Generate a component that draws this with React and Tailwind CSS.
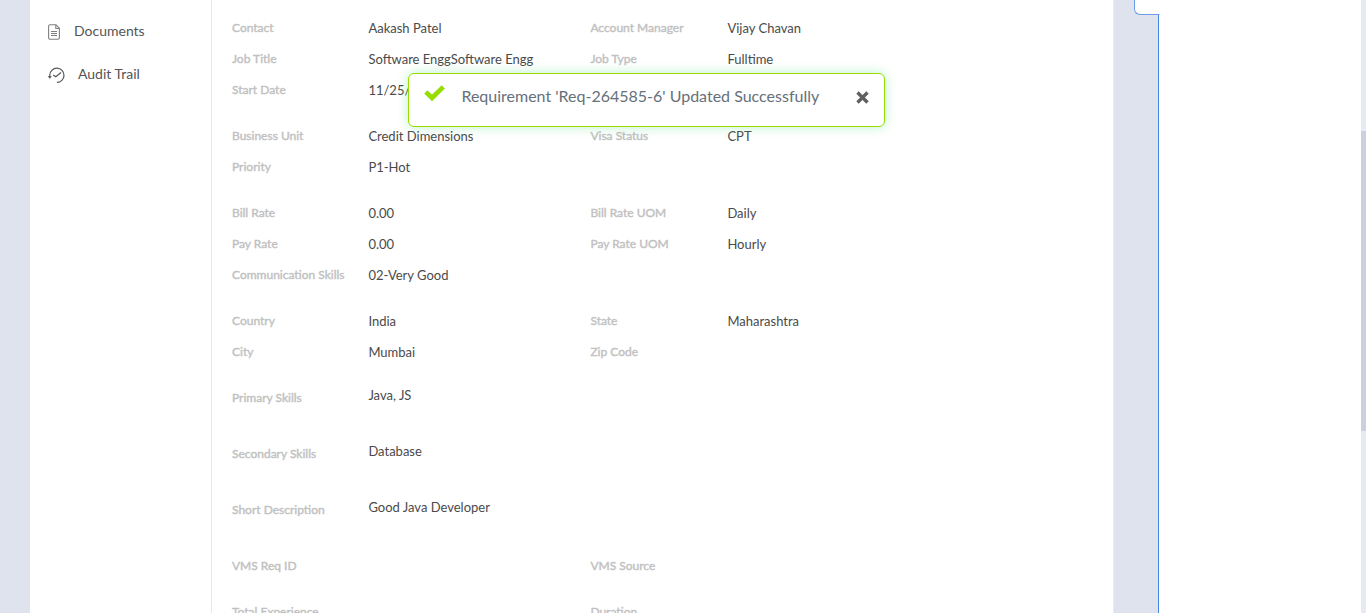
const groups = [
  [
    ['Contact', 'Aakash Patel', 'Account Manager', 'Vijay Chavan'],
    ['Job Title', 'Software EnggSoftware Engg', 'Job Type', 'Fulltime'],
    ['Start Date', '11/25/2020', '', ''],
  ],
  [
    ['Business Unit', 'Credit Dimensions', 'Visa Status', 'CPT'],
    ['Priority', 'P1-Hot', '', ''],
  ],
  [
    ['Bill Rate', '0.00', 'Bill Rate UOM', 'Daily'],
    ['Pay Rate', '0.00', 'Pay Rate UOM', 'Hourly'],
    ['Communication Skills', '02-Very Good', '', ''],
  ],
  [
    ['Country', 'India', 'State', 'Maharashtra'],
    ['City', 'Mumbai', 'Zip Code', ''],
  ],
];

const longFields = [
  ['Primary Skills', 'Java, JS'],
  ['Secondary Skills', 'Database'],
  ['Short Description', 'Good Java Developer'],
];

function Label({ children }) {
  return (
    <span className="text-[12px] leading-[18px] text-[#c1c1c1] [-webkit-text-stroke:0.4px_#c1c1c1]">
      {children}
    </span>
  );
}

function Value({ children }) {
  return <span className="text-[13px] leading-[18px] text-[#4a4a4a]">{children}</span>;
}

function Row({ cells }) {
  return (
    <div className="grid h-[31px] grid-cols-[136.4px_222px_137px_1fr] items-center whitespace-nowrap">
      <Label>{cells[0]}</Label>
      <Value>{cells[1]}</Value>
      <Label>{cells[2]}</Label>
      <Value>{cells[3]}</Value>
    </div>
  );
}

function DocumentIcon() {
  return (
    <svg className="h-4 w-3" viewBox="0 0 12 16" fill="none" stroke="#808080" strokeWidth="1.1">
      <path d="M2 .8h6l3.400 3.400v9.600a1.400 1.400 0 0 1-1.400 1.400H2A1.400 1.400 0 0 1 .6 13.800V2.200A1.400 1.400 0 0 1 2 .8Z" />
      <path d="M7.800 1v3.500h3.400M3 7.500h6M3 9.500h6M3 11.500h6" />
    </svg>
  );
}

function AuditIcon() {
  return (
    <svg className="-ml-px h-[18px] w-[18px]" viewBox="0 0 18 18" fill="none" stroke="#555" strokeWidth="1.2">
      <path d="M2.800 11V9a7.100 7.100 0 1 1 7.100 7.400" />
      <path d="M6.200 8.900 8.800 10.800 14 6.500" />
      <path d="M.6 10.300h4.200L2.900 12.800Z" fill="#555" stroke="none" />
    </svg>
  );
}

function Toast() {
  return (
    <div className="absolute top-[73px] left-[408px] flex h-[54px] w-[477px] items-start rounded-[6px] border border-[#97de00] bg-white shadow-[0_0_12px_rgba(80,220,120,0.4)]">
      <svg className="mt-[11px] ml-[15px] h-[16px] w-[21px]" viewBox="0 0 21 16" fill="none" stroke="#97de00" strokeWidth="4.600">
        <path d="M1.800 6.900 8 13 19.300 1.900" />
      </svg>
      <span className="mt-[11px] ml-[16.4px] w-[394.6px] text-[16px] leading-[22px] whitespace-nowrap text-[#66707a]">
        Requirement 'Req-264585-6' Updated Successfully
      </span>
      <svg className="mt-[17px] h-[13px] w-[13px]" viewBox="0 0 13 13" stroke="#606060" strokeWidth="3.300">
        <path d="m1.500 1.500 10 10M11.500 1.500l-10 10" />
      </svg>
    </div>
  );
}

export default function App() {
  return (
    <div className="relative flex h-[613px] w-[1366px] overflow-hidden bg-[#dfe3ee] font-['Lato','Open_Sans',sans-serif]">
      <aside className="ml-[30px] flex w-[182px] shrink-0 flex-col border-r border-[#e6e8ee] bg-white pt-[10px] text-[14px] text-[#555]">
        <a className="flex h-[43px] items-center pl-[18px]">
          <DocumentIcon />
          <span className="ml-[14px] pb-[3px]">Documents</span>
        </a>
        <a className="flex h-[43px] items-center pl-[18px]">
          <AuditIcon />
          <span className="ml-[13px] pb-[3px]">Audit Trail</span>
        </a>
      </aside>

      <main className="flex w-[902px] shrink-0 flex-col gap-[15px] border-r border-[#e9ecf3] bg-white pt-[12px] pl-[20px]">
        {groups.map((rows, i) => (
          <section key={i}>
            {rows.map((cells) => (
              <Row key={cells[0]} cells={cells} />
            ))}
          </section>
        ))}
        <section>
          {longFields.map(([label, value]) => (
            <div key={label} className="grid h-[56px] grid-cols-[136.4px_1fr] items-start">
              <div className="flex pt-[7px]"><Label>{label}</Label></div>
              <div className="flex pt-[4px]"><Value>{value}</Value></div>
            </div>
          ))}
          <Row cells={['VMS Req ID', '', 'VMS Source', '']} />
          <div className="mt-[15px]">
            <Row cells={['Total Experience', '', 'Duration', '']} />
          </div>
        </section>
      </main>

      <div className="flex w-[45px] shrink-0 justify-end">
        <div className="h-[15px] w-[25px] rounded-bl-[6px] border-b border-l border-[#6b9eea] bg-white" />
      </div>
      <div className="flex w-[202px] shrink-0 flex-col">
        <div className="h-[15px] w-full bg-white">
          <div className="h-full w-px border-b border-[#a9c5f2]" />
        </div>
        <div className="-ml-px flex-1 border-l border-[#4784e0] bg-white" />
      </div>
      <div className="w-[5px] shrink-0 bg-[#e8eaf2] pt-[131px]">
        <div className="h-[300px] bg-[#cccfde]" />
      </div>

      <Toast />
    </div>
  );
}
